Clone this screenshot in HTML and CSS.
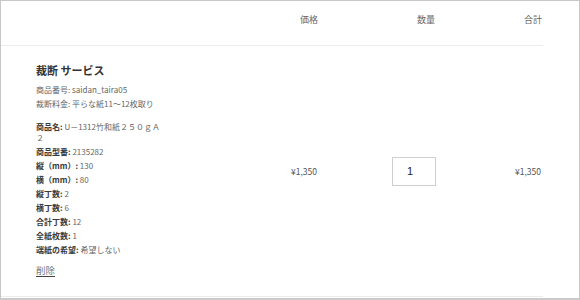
FILE: index.html
```html
<!DOCTYPE html>
<html lang="ja">
<head>
<meta charset="utf-8">
<link rel="stylesheet" href="styles.css">
</head>
<body>
<div class="cart">
  <div class="head">
    <div class="hcell product-h"></div>
    <div class="hcell">価格</div>
    <div class="hcell">数量</div>
    <div class="hcell">合計</div>
  </div>
  <div class="row">
    <div class="product">
      <h2 class="title">裁断 サービス</h2>
      <div class="meta">
        <p>商品番号: saidan_taira05</p>
        <p>裁断料金: 平らな紙11～12枚取り</p>
      </div>
      <dl class="props">
        <div class="prop"><dt>商品名:</dt> <dd>U－1312竹和紙２５０ｇＡ２</dd></div>
        <div class="prop"><dt>商品型番:</dt> <dd>2135282</dd></div>
        <div class="prop"><dt>縦（mm）:</dt> <dd>130</dd></div>
        <div class="prop"><dt>横（mm）:</dt> <dd>80</dd></div>
        <div class="prop"><dt>縦丁数:</dt> <dd>2</dd></div>
        <div class="prop"><dt>横丁数:</dt> <dd>6</dd></div>
        <div class="prop"><dt>合計丁数:</dt> <dd>12</dd></div>
        <div class="prop"><dt>全紙枚数:</dt> <dd>1</dd></div>
        <div class="prop"><dt>端紙の希望:</dt> <dd>希望しない</dd></div>
      </dl>
      <a class="remove" href="#">削除</a>
    </div>
    <div class="cell price">¥1,350</div>
    <div class="cell qty"><input class="qty-input" type="text" value="1"></div>
    <div class="cell total">¥1,350</div>
  </div>
</div>
</body>
</html>
```
FILE: styles.css
```css
html {
  background: #cccccc;
}
body {
  margin: 0;
  box-sizing: border-box;
  width: 580px;
  height: 299px;
  border: 1px solid #c8c8c8;
  background: #ffffff;
  font-family: "Noto Sans CJK JP", "Noto Sans", sans-serif;
  color: #555;
}
.cart {
  width: 542px;
}
.head,
.row {
  display: grid;
  grid-template-columns: 199px 118px 118px 107px;
}
.head {
  height: 44px;
  border-bottom: 1px solid #ececec;
}
.hcell {
  padding-top: 13px;
  line-height: 12px;
  font-size: 9px;
  color: #666;
  text-align: right;
  padding-right: 1px;
}
.hcell:nth-child(2) {
  padding-right: 0;
}
.row {
  border-bottom: 1px solid #ececec;
  padding: 17px 0 17px;
}
.product {
  padding-left: 35px;
}
.title {
  margin: 0;
  font-size: 11px;
  line-height: 14px;
  font-weight: 700;
  color: #333;
}
.meta {
  margin-top: 6px;
}
.meta p {
  margin: 0;
  font-size: 8px;
  line-height: 14px;
  color: #666;
}
.props {
  margin: 10px 0 0;
  width: 130px;
  display: flex;
  flex-direction: column;
  gap: 3px;
}
.prop {
  font-size: 8px;
  line-height: 11px;
}
.prop dt {
  display: inline;
  font-weight: 700;
  color: #3a3a3a;
}
.prop dd {
  display: inline;
  margin: 0;
  color: #666;
}
.remove {
  display: inline-block;
  margin-top: 8px;
  font-size: 9.5px;
  line-height: 12px;
  color: #777;
  text-decoration: none;
  border-bottom: 1px solid #444;
}
.cell {
  display: flex;
  align-items: center;
  justify-content: flex-end;
  font-size: 8.5px;
  color: #555;
}
.price {
  padding-right: 1px;
}
.total {
  padding-right: 2px;
}
.qty-input {
  box-sizing: border-box;
  width: 44px;
  height: 29px;
  border: 1px solid #cfcfcf;
  padding: 0 0 0 14px;
  font-family: "Liberation Sans", Arial, sans-serif;
  font-size: 11px;
  color: #222;
  background: #fff;
  outline: none;
}
```
